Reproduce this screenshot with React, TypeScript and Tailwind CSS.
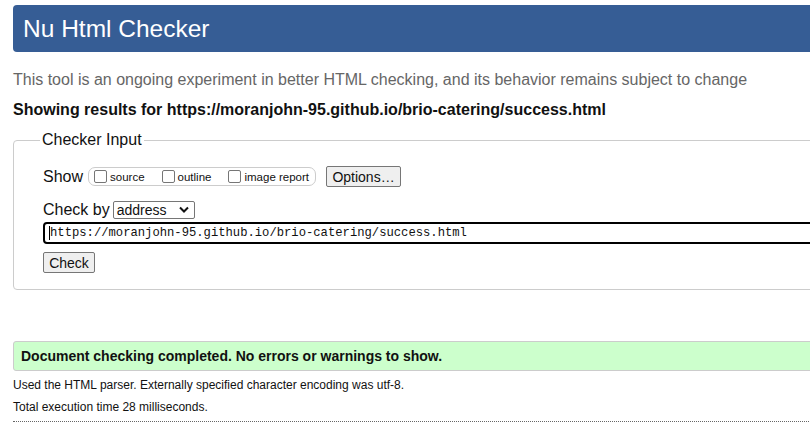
const Checkbox = ({ label }: { label: string }) => (
  <label className="flex items-center gap-[3px]">
    <span className="w-[13px] h-[13px] border border-[#767676] rounded-[2px] bg-white" />
    <span className="text-[11.5px] leading-none mt-[2px]">{label}</span>
  </label>
)

export default function App() {
  return (
    <div className="w-[810px] h-[436px] overflow-hidden bg-white text-[#111] font-['Liberation_Sans',Arial,sans-serif]">
      <div className="w-[840px] ml-[13px]">
        <header className="mt-[5px] h-[47px] rounded-[4px] bg-[#365d95] flex items-center pl-[10px]">
          <h1 className="text-[24.5px] text-white leading-none mt-[1px]">Nu Html Checker</h1>
        </header>

        <p className="mt-[19px] text-[16px] leading-[18px] text-[#666]">
          This tool is an ongoing experiment in better HTML checking, and its behavior remains subject to change
        </p>
        <p className="mt-[12px] text-[16px] leading-[18px] font-bold">
          Showing results for https://moranjohn-95.github.io/brio-catering/success.html
        </p>

        <fieldset className="mt-[12px] border border-[#ccc] rounded-[4px] pl-[26px] pb-[16px] h-[159px]">
          <legend className="px-[2px] text-[16px] leading-[18px]">Checker Input</legend>
          <div className="pl-[3px]">
            <div className="flex items-center mt-[17px] h-[21px]">
              <span className="text-[16px]">Show</span>
              <div className="ml-[5px] h-[19px] flex items-center gap-[17px] border border-[#ccc] rounded-[7px] pl-[5px] pr-[6px]">
                <Checkbox label="source" />
                <Checkbox label="outline" />
                <Checkbox label="image report" />
              </div>
              <button className="ml-[10px] w-[75px] h-[21px] bg-[#efefef] border border-[#767676] rounded-[2px] text-[14px] leading-none">
                Options…
              </button>
            </div>

            <div className="flex items-center mt-[13px] h-[19px]">
              <span className="text-[16px]">Check by</span>
              <div className="ml-[3px] w-[82px] h-[18px] border border-[#767676] rounded-[2px] flex items-center justify-between pl-[3px] pr-[5px]">
                <span className="text-[14px] leading-none">address</span>
                <svg width="10" height="7" viewBox="0 0 10 7">
                  <path d="M1 1.5 L5 5.5 L9 1.5" fill="none" stroke="#111" strokeWidth="2" />
                </svg>
              </div>
            </div>

            <div className="mt-[3px] h-[22px] border-2 border-black rounded-[4px] flex items-center pl-[4px]">
              <span className="font-['Liberation_Mono','DejaVu_Sans_Mono',monospace] text-[12.2px] leading-none">
                <span className="border-l border-black">h</span>ttps://moranjohn-95.github.io/brio-catering/success.html
              </span>
            </div>

            <button className="mt-[8px] w-[52px] h-[21px] bg-[#efefef] border border-[#767676] rounded-[2px] text-[14px] leading-none">
              Check
            </button>
          </div>
        </fieldset>

        <div className="mt-[51px] h-[30px] bg-[#ccffcc] border border-[#ccc] rounded-[3px] flex items-center pl-[7px]">
          <span className="text-[14px] font-bold">Document checking completed. No errors or warnings to show.</span>
        </div>

        <p className="mt-[7px] text-[12px] leading-[14px]">Used the HTML parser. Externally specified character encoding was utf-8.</p>
        <p className="mt-[8px] text-[12px] leading-[14px]">Total execution time 28 milliseconds.</p>
        <div className="mt-[7px] w-[800px] border-t border-dotted border-[#666]" />
      </div>
    </div>
  )
}
